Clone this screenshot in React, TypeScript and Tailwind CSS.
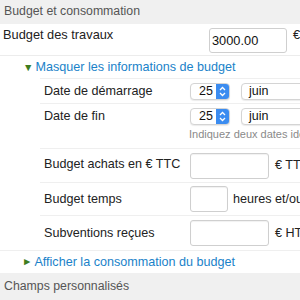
import React from 'react';

const font = { fontFamily: '"Liberation Sans", Arial, sans-serif' };

const Stepper: React.FC<{ value: string }> = ({ value }) => (
    <div className="flex items-center h-[17px] w-[40px] rounded-[4px] border border-[#d4d4d4] bg-white shadow-[0_1px_1px_rgba(0,0,0,0.08)] overflow-hidden">
        <span className="flex-1 pl-[8px] text-[12.5px] text-[#111]">{value}</span>
        <span className="w-[13px] h-full bg-[#3b8cf0] flex items-center justify-center">
            <svg width="7" height="11" viewBox="0 0 7 11" fill="none" stroke="white" strokeWidth="1.3">
                <path d="M1 4 L3.5 1.5 L6 4" />
                <path d="M1 7 L3.5 9.5 L6 7" />
            </svg>
        </span>
    </div>
);

const MonthSelect: React.FC = () => (
    <div className="h-[17px] w-[120px] rounded-[4px] border border-[#d4d4d4] bg-white shadow-[0_1px_1px_rgba(0,0,0,0.08)] pl-[7px] text-[12.5px] text-[#111] leading-[15px]">
        juin
    </div>
);

const TextInput: React.FC<{ w: string }> = ({ w }) => (
    <div className={`${w} h-[26px] rounded-[3px] border border-[#cfcfcf] bg-white shadow-[inset_0_1px_1px_rgba(0,0,0,0.06)]`} />
);

export default function App() {
    return (
        <div className="w-[300px] h-[300px] overflow-hidden bg-white text-[#222]" style={font}>
            <div className="w-[420px]">
                <div className="h-[24px] bg-[#f0f0f0] pl-[4px] text-[12.3px] text-[#555] leading-[22px]">
                    Budget et consommation
                </div>
                <div className="flex items-start h-[32px] border-b border-[#ececec]">
                    <span className="pl-[3px] pt-[1px] w-[209px] text-[12.8px] text-[#222]">Budget des travaux</span>
                    <div className="mt-[4px] w-[78px] h-[25px] rounded-[3px] border border-[#cfcfcf] bg-white pl-[2px] pt-[4px] text-[12.8px] text-[#111] leading-[16px]">
                        3000.00
                    </div>
                    <span className="pl-[6px] pt-[1px] text-[12.8px]">€</span>
                </div>
                <div className="flex items-center h-[22px] pt-[1px] pl-[23px] gap-[2px] text-[12.6px] text-[#1a82c9]">
                    <span className="text-[#3e7d1e] text-[10.5px]">▼</span>
                    <span>Masquer les informations de budget</span>
                </div>
                <div className="ml-[40px]">
                    <div className="flex items-center h-[25px] border-t border-[#efefef]">
                        <span className="pl-[4px] w-[150px] text-[12.6px]">Date de démarrage</span>
                        <Stepper value="25" />
                        <div className="ml-[11px]"><MonthSelect /></div>
                    </div>
                    <div className="border-t border-[#efefef] pt-[3px] h-[45px]">
                        <div className="flex items-center h-[19px]">
                            <span className="pl-[4px] w-[150px] text-[12.6px]">Date de fin</span>
                            <Stepper value="25" />
                            <div className="ml-[11px]"><MonthSelect /></div>
                        </div>
                        <div className="pl-[149px] text-[11px] text-[#8a8a8a] whitespace-nowrap">
                            Indiquez deux dates identiques
                        </div>
                    </div>
                    <div className="flex items-center h-[34px] border-t border-[#efefef]">
                        <span className="pl-[4px] pb-[3px] w-[150px] text-[12.6px]">Budget achats en € TTC</span>
                        <TextInput w="w-[79px]" />
                        <span className="pl-[6px] text-[12.6px]">€ TTC</span>
                    </div>
                    <div className="flex items-center h-[33px] border-t border-[#efefef]">
                        <span className="pl-[4px] w-[150px] text-[12.6px]">Budget temps</span>
                        <TextInput w="w-[38px]" />
                        <span className="pl-[5px] text-[12.6px]">heures et/ou</span>
                    </div>
                    <div className="flex items-center h-[35px] border-t border-[#efefef]">
                        <span className="pl-[4px] w-[150px] text-[12.6px]">Subventions reçues</span>
                        <TextInput w="w-[79px]" />
                        <span className="pl-[6px] text-[12.6px]">€ HT</span>
                    </div>
                </div>
                <div className="flex items-center h-[23px] border-t border-[#efefef] pl-[22px] gap-[2px] text-[12.6px] text-[#1a82c9]">
                    <span className="text-[#3e7d1e] text-[10.5px]">►</span>
                    <span>Afficher la consommation du budget</span>
                </div>
                <div className="h-[28px] bg-[#f0f0f0] pl-[4px] text-[12.3px] text-[#555] leading-[26px]">
                    Champs personnalisés
                </div>
            </div>
        </div>
    );
}
